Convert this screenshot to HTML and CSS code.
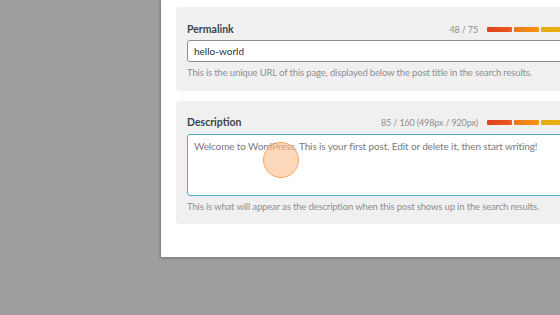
FILE: index.html
```html
<!DOCTYPE html>
<html lang="en">
<head>
<meta charset="utf-8">
<title>SEO settings</title>
<link rel="stylesheet" href="styles.css">
</head>
<body>
<div class="panel">
  <section class="field">
    <div class="field-head">
      <span class="label">Permalink</span>
      <span class="counter">48 / 75</span>
      <span class="bars"><i class="bar b1"></i><i class="bar b2"></i><i class="bar b3"></i><i class="bar b4"></i><i class="bar b5"></i></span>
    </div>
    <div class="input">hello-world</div>
    <p class="help">This is the unique URL of this page, displayed below the post title in the search results.</p>
  </section>
  <section class="field">
    <div class="field-head">
      <span class="label">Description</span>
      <span class="counter">85 / 160 (498px / 920px)</span>
      <span class="bars"><i class="bar b1"></i><i class="bar b2"></i><i class="bar b3"></i><i class="bar b4"></i><i class="bar b5"></i></span>
    </div>
    <div class="textarea">Welcome to WordPress. This is your first post. Edit or delete it, then start writing!
      <span class="click"></span>
    </div>
    <p class="help">This is what will appear as the description when this post shows up in the search results.</p>
  </section>
</div>
</body>
</html>
```

FILE: styles.css
```css
html, body {
  margin: 0;
  padding: 0;
  width: 560px;
  height: 315px;
  overflow: hidden;
  background: #9e9e9e;
  font-family: Lato, "Noto Sans", sans-serif;
}

.panel {
  margin-left: 161px;
  width: 485px;
  box-sizing: border-box;
  padding: 7px 15px 33px 15px;
  background: #ffffff;
  box-shadow: -1px 1px 3px rgba(0, 0, 0, 0.25);
  display: flex;
  flex-direction: column;
  gap: 10px;
}

.field {
  background: #f0f0f1;
  border-radius: 4px;
  padding: 14px 11px 11px 11px;
  display: flex;
  flex-direction: column;
}

.field + .field {
  padding-top: 13px;
  padding-bottom: 10px;
}

.field-head {
  display: flex;
  align-items: center;
  height: 16px;
  margin-bottom: 3px;
}

.field + .field .field-head {
  margin-bottom: 4px;
}

.label {
  font-size: 10.5px;
  font-weight: 700;
  color: #3c434a;
  flex: 1;
}

.counter {
  font-size: 9px;
  letter-spacing: -0.15px;
  color: #8c8f94;
  margin-right: 9px;
}

.bars {
  display: flex;
  gap: 2px;
}

.bar {
  display: block;
  width: 25px;
  height: 5px;
  border-radius: 1px;
}

.b1 { background: linear-gradient(90deg, #e2401f, #ec5b1c); }
.b2 { background: linear-gradient(90deg, #f07a16, #f3941a); }
.b3 { background: linear-gradient(90deg, #e7a812, #e6b60e); }
.b4 { background: #d9c20e; }
.b5 { background: #b8c810; }

.input {
  height: 22px;
  box-sizing: border-box;
  border: 1px solid #8c8f94;
  border-radius: 3px;
  background: #ffffff;
  padding: 0 6px;
  font-size: 10px;
  line-height: 20px;
  color: #2c3338;
}

.textarea {
  position: relative;
  height: 62px;
  box-sizing: border-box;
  border: 1px solid #4eaec9;
  border-radius: 3px;
  background: #ffffff;
  padding: 4px 6px;
  font-size: 10px;
  letter-spacing: -0.13px;
  line-height: 14px;
  color: #777b80;
}

.click {
  position: absolute;
  left: 75px;
  top: 7px;
  width: 34px;
  height: 34px;
  border-radius: 50%;
  background: rgba(252, 190, 140, 0.6);
  border: 1px solid #f6a461;
}

.help {
  margin: 4px 0 0 0;
  font-size: 9.5px;
  letter-spacing: -0.15px;
  line-height: 14px;
  color: #8c8f94;
}
```
